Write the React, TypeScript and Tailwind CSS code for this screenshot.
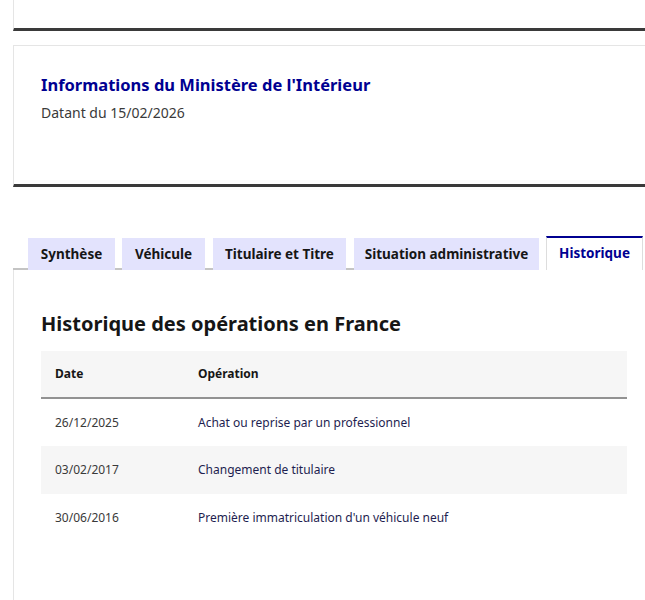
import React from "react";

const tabs = [
  { label: "Synthèse", cls: "w-[87px]" },
  { label: "Véhicule", cls: "ml-[7px] w-[83px]" },
  { label: "Titulaire et Titre", cls: "ml-[8px] w-[133px]" },
  { label: "Situation administrative", cls: "ml-[8px] w-[185px]" },
];

const rows = [
  { date: "26/12/2025", op: "Achat ou reprise par un professionnel" },
  { date: "03/02/2017", op: "Changement de titulaire" },
  { date: "30/06/2016", op: "Première immatriculation d'un véhicule neuf" },
];

export default function App() {
  return (
    <div className="min-h-[600px] w-full overflow-hidden bg-white pl-[13px] font-['Noto_Sans',sans-serif] text-[#161616]">
      {/* top card remnant */}
      <div className="h-[31px] border-l border-[#e5e5e5] border-b-[3px] border-b-[#3a3a3a]" />

      {/* info card */}
      <div className="mt-[14px] h-[142px] border-l border-t border-[#e5e5e5] border-b-[3px] border-b-[#3a3a3a] pl-[27px] pt-[26px]">
        <h2 className="text-[16.5px] font-bold leading-[26px] text-[#000091]">
          Informations du Ministère de l'Intérieur
        </h2>
        <p className="mt-[4px] text-[14px] leading-[22px] text-[#3a3a3a]">Datant du 15/02/2026</p>
      </div>

      {/* tabs */}
      <div className="mt-[49px]">
        <div className="flex items-end whitespace-nowrap pl-[15px]">
          {tabs.map((t) => (
            <div
              key={t.label}
              className={`flex h-[32px] shrink-0 items-center justify-center bg-[#e3e3fd] text-[13.5px] font-bold text-[#161616] ${t.cls}`}
            >
              {t.label}
            </div>
          ))}
          <div className="ml-[7px] flex h-[34px] w-[97px] shrink-0 items-center justify-center border-x border-[#dddddd] border-t-2 border-t-[#000091] bg-white pb-[2px] text-[13.5px] font-bold text-[#000091]">
            Historique
          </div>
        </div>
        <div className="-mt-[2px] h-[2px] w-[440px] bg-[#c4c4c4]" />
      </div>

      {/* panel */}
      <div className="min-h-[330px] border-l border-[#e5e5e5] pl-[27px] pr-[18px] pt-[40px]">
        <h3 className="text-[20px] font-bold leading-[28px] text-[#161616]">
          Historique des opérations en France
        </h3>
        <table className="mt-[13px] w-full border-collapse text-left text-[12px]">
          <thead>
            <tr className="h-[47px] border-b-2 border-[#929292] bg-[#f6f6f6]">
              <th className="w-[157px] pl-[14px] font-bold text-[#161616]">Date</th>
              <th className="font-bold text-[#161616]">Opération</th>
            </tr>
          </thead>
          <tbody>
            {rows.map((r, i) => (
              <tr key={r.date} className={i % 2 === 1 ? "h-[48px] bg-[#f6f6f6]" : "h-[48px] bg-white"}>
                <td className="pl-[14px] text-[#3a3a3a]">{r.date}</td>
                <td className="text-[#1e1e50]">{r.op}</td>
              </tr>
            ))}
          </tbody>
        </table>
      </div>
    </div>
  );
}
